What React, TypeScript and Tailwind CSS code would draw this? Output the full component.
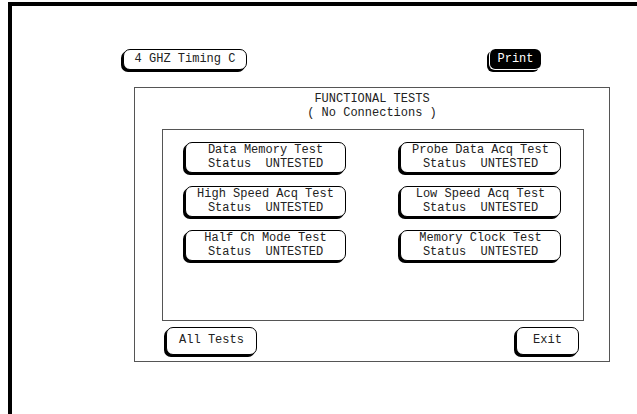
import React from "react"

const mono = "font-['Liberation_Mono','DejaVu_Sans_Mono',monospace]"

function Key({ label, className = "" }: { label: React.ReactNode; className?: string }) {
  return (
    <div
      className={`flex flex-col items-center justify-center rounded-[7px] border border-black bg-white shadow-[-2px_2px_0_0_#000] text-[12px] leading-[14px] text-[#222] ${className}`}
    >
      {label}
    </div>
  )
}

const tests = [
  ["Data Memory Test", "Probe Data Acq Test"],
  ["High Speed Acq Test", "Low Speed Acq Test"],
  ["Half Ch Mode Test", "Memory Clock Test"],
]

function TestKey({ name }: { name: string }) {
  return (
    <Key
      className="h-[31px] w-[161px] pb-[2px]"
      label={
        <>
          <span className="whitespace-pre">{name}</span>
          <span className="whitespace-pre">Status  UNTESTED</span>
        </>
      }
    />
  )
}

export default function App() {
  return (
    <div className={`h-[414px] w-[637px] overflow-hidden bg-white pt-[2px] pl-[8px] ${mono}`}>
      <div className="h-[412px] border-t-4 border-l-4 border-black">
        {/* top row */}
        <div className="flex pt-[43px] pl-[111px]">
          <Key className="h-[21px] w-[124px] pb-[1px]" label="4 GHZ Timing C" />
          <div className="ml-[242px] flex h-[21px] w-[52px] items-center justify-center rounded-[6px] border-b border-l border-white bg-black pb-[1px] text-[12px] text-white shadow-[-2px_2px_0_0_#000]">
            Print
          </div>
        </div>

        {/* functional tests panel */}
        <div className="mt-[17px] ml-[122px] flex h-[275px] w-[476px] flex-col border border-[#555]">
          <div className="flex flex-col items-center pt-[4px] text-[12px] leading-[14px] text-[#222]">
            <span>FUNCTIONAL TESTS</span>
            <span className="whitespace-pre">( No Connections )</span>
          </div>

          <div className="mt-[9px] ml-[27px] h-[192px] w-[422px] border border-[#555] pt-[12px]">
            <div className="flex flex-col gap-[13px]">
              {tests.map(([a, b]) => (
                <div key={a} className="flex pl-[22px]">
                  <TestKey name={a} />
                  <div className="ml-[54px]">
                    <TestKey name={b} />
                  </div>
                </div>
              ))}
            </div>
          </div>

          <div className="mt-[6px] flex pl-[31px]">
            <Key className="h-[28px] w-[91px] pb-[2px]" label="All Tests" />
            <Key className="ml-[259px] h-[28px] w-[63px] pb-[2px]" label="Exit" />
          </div>
        </div>
      </div>
    </div>
  )
}
